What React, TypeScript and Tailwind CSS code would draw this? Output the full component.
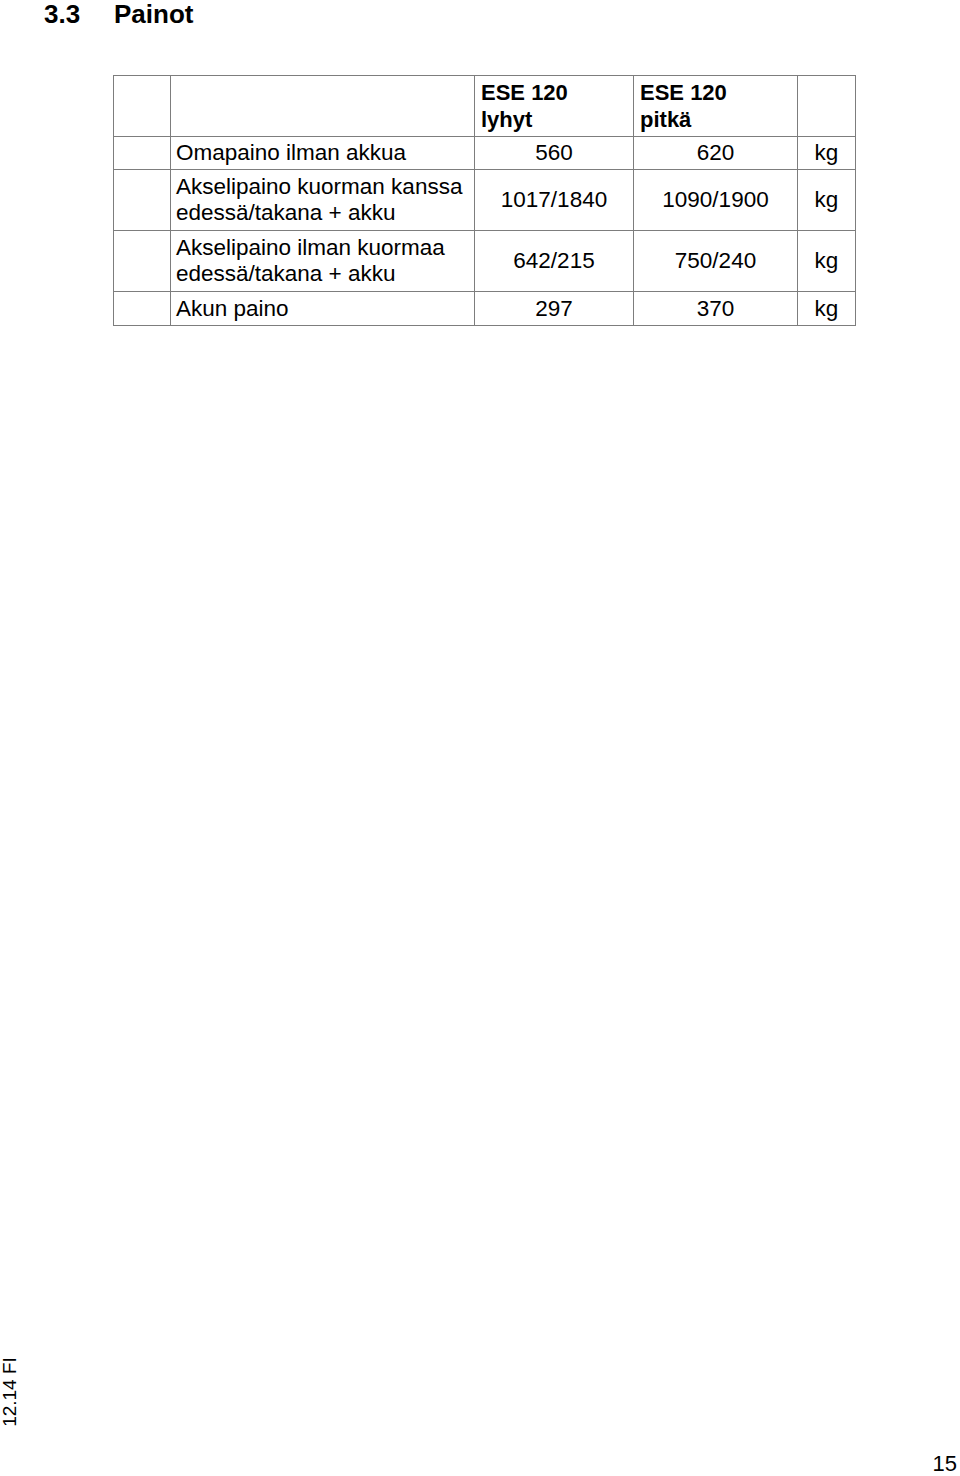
import React from "react";

const font = { fontFamily: '"Liberation Sans", Arial, sans-serif' };

export default function App() {
  const cell = "border border-[#7d7d7d]";
  return (
    <div className="relative h-[1476px] w-[960px] bg-white text-black overflow-hidden" style={font}>
      <div className="flex pl-[44px] mt-[-1px] h-[30px] text-[26px] font-bold leading-[30px]">
        <span className="w-[70px]">3.3</span>
        <span>Painot</span>
      </div>
      <div className="pl-[113px] pt-[46px]">
        <table className="table-fixed border-collapse text-[22.5px] leading-[26px]">
          <colgroup>
            <col className="w-[57px]" />
            <col className="w-[304px]" />
            <col className="w-[159px]" />
            <col className="w-[164px]" />
            <col className="w-[58px]" />
          </colgroup>
          <tbody>
            <tr className="h-[61px]">
              <td className={cell}></td>
              <td className={cell}></td>
              <td className={`${cell} align-top font-bold text-[22px] leading-[27px] pl-[6px] pt-[3px]`}>
                ESE 120
                <br />
                lyhyt
              </td>
              <td className={`${cell} align-top font-bold text-[22px] leading-[27px] pl-[6px] pt-[3px]`}>
                ESE 120
                <br />
                pitkä
              </td>
              <td className={cell}></td>
            </tr>
            <tr className="h-[33px]">
              <td className={cell}></td>
              <td className={`${cell} pl-[5px] align-middle`}>Omapaino ilman akkua</td>
              <td className={`${cell} text-center align-middle`}>560</td>
              <td className={`${cell} text-center align-middle`}>620</td>
              <td className={`${cell} text-center align-middle`}>kg</td>
            </tr>
            <tr className="h-[61px]">
              <td className={cell}></td>
              <td className={`${cell} pl-[5px] align-middle`}>
                Akselipaino kuorman kanssa
                <br />
                edessä/takana + akku
              </td>
              <td className={`${cell} text-center align-middle`}>1017/1840</td>
              <td className={`${cell} text-center align-middle`}>1090/1900</td>
              <td className={`${cell} text-center align-middle`}>kg</td>
            </tr>
            <tr className="h-[61px]">
              <td className={cell}></td>
              <td className={`${cell} pl-[5px] align-middle`}>
                Akselipaino ilman kuormaa
                <br />
                edessä/takana + akku
              </td>
              <td className={`${cell} text-center align-middle`}>642/215</td>
              <td className={`${cell} text-center align-middle`}>750/240</td>
              <td className={`${cell} text-center align-middle`}>kg</td>
            </tr>
            <tr className="h-[34px]">
              <td className={cell}></td>
              <td className={`${cell} pl-[5px] align-middle`}>Akun paino</td>
              <td className={`${cell} text-center align-middle`}>297</td>
              <td className={`${cell} text-center align-middle`}>370</td>
              <td className={`${cell} text-center align-middle`}>kg</td>
            </tr>
          </tbody>
        </table>
      </div>
      <div className="absolute left-[-1px] top-[1356px] h-[72px] w-[22px]">
        <div className="absolute left-1/2 top-1/2 -translate-x-1/2 -translate-y-1/2 -rotate-90 whitespace-nowrap text-[19px] leading-[22px]">
          12.14 FI
        </div>
      </div>
      <div className="absolute right-[3px] bottom-0 text-[22px] leading-[24px]">15</div>
    </div>
  );
}
